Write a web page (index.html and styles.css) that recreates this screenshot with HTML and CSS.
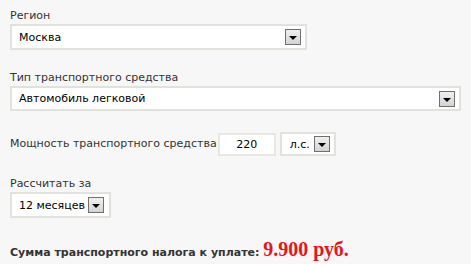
FILE: index.html
```html
<!DOCTYPE html>
<html lang="ru">
<head>
<meta charset="utf-8">
<link rel="stylesheet" href="styles.css">
</head>
<body>
<div class="calc">
  <div class="field">
    <div class="label">Регион</div>
    <div class="select w-region"><span class="value">Москва</span><span class="btn"><span class="tri"></span></span></div>
  </div>
  <div class="field">
    <div class="label">Тип транспортного средства</div>
    <div class="select w-type"><span class="value">Автомобиль легковой</span><span class="btn"><span class="tri"></span></span></div>
  </div>
  <div class="field row">
    <span class="label inline">Мощность транспортного средства</span>
    <div class="input">220</div>
    <div class="select w-unit"><span class="value">л.с.</span><span class="btn"><span class="tri"></span></span></div>
  </div>
  <div class="field">
    <div class="label">Рассчитать за</div>
    <div class="select w-period"><span class="value">12 месяцев</span><span class="btn"><span class="tri"></span></span></div>
  </div>
  <div class="total">Сумма транспортного налога к уплате: <span class="sum">9.900 руб.</span></div>
</div>
</body>
</html>
```

FILE: styles.css
```css
html, body {
  margin: 0;
  padding: 0;
  background: #f7f7f7;
}
.calc {
  padding: 8px 10px;
  font-family: "DejaVu Sans", Verdana, sans-serif;
  font-size: 11px;
  color: #333;
  display: flex;
  flex-direction: column;
}
.field {
  display: flex;
  flex-direction: column;
  align-items: flex-start;
  margin-bottom: 20px;
}
.field.row {
  flex-direction: row;
  align-items: center;
  margin-top: 1px;
}
.label {
  line-height: 16px;
  height: 16px;
}
.label.inline {
  margin-right: 1px;
}
.select {
  box-sizing: border-box;
  height: 26px;
  border: 2px solid #e2e2dc;
  background: #fff;
  display: flex;
  align-items: center;
  padding: 0 4px 0 7px;
  color: #000;
  font-size: 11px;
}
.value {
  flex: 1;
  white-space: nowrap;
}
.w-region { width: 297px; }
.w-type { width: 451px; height: 25px; }
.w-unit { width: 56px; height: 24px; margin-left: 4px; padding-left: 8px; }
.w-period { width: 101px; padding-left: 7px; padding-right: 5px; }
.btn {
  box-sizing: border-box;
  width: 16px;
  height: 16px;
  border: 1px solid #6f6f6f;
  background: linear-gradient(#f0f0f0, #d4d4d4);
  display: flex;
  align-items: center;
  justify-content: center;
  margin-left: 2px;
}
.tri {
  width: 0;
  height: 0;
  border-left: 4px solid transparent;
  border-right: 4px solid transparent;
  border-top: 4px solid #000;
  margin-top: 2px;
}
.input {
  box-sizing: border-box;
  width: 58px;
  height: 23px;
  border: 2px solid #e8e8e2;
  background: #fff;
  color: #000;
  text-align: center;
  line-height: 19px;
  font-size: 11px;
}
.total {
  font-weight: bold;
  color: #333;
  font-size: 11px;
  line-height: 20px;
  margin-top: 1px;
}
.sum {
  font-family: "Liberation Serif", "Times New Roman", serif;
  font-size: 20px;
  color: #e8141c;
}
```
